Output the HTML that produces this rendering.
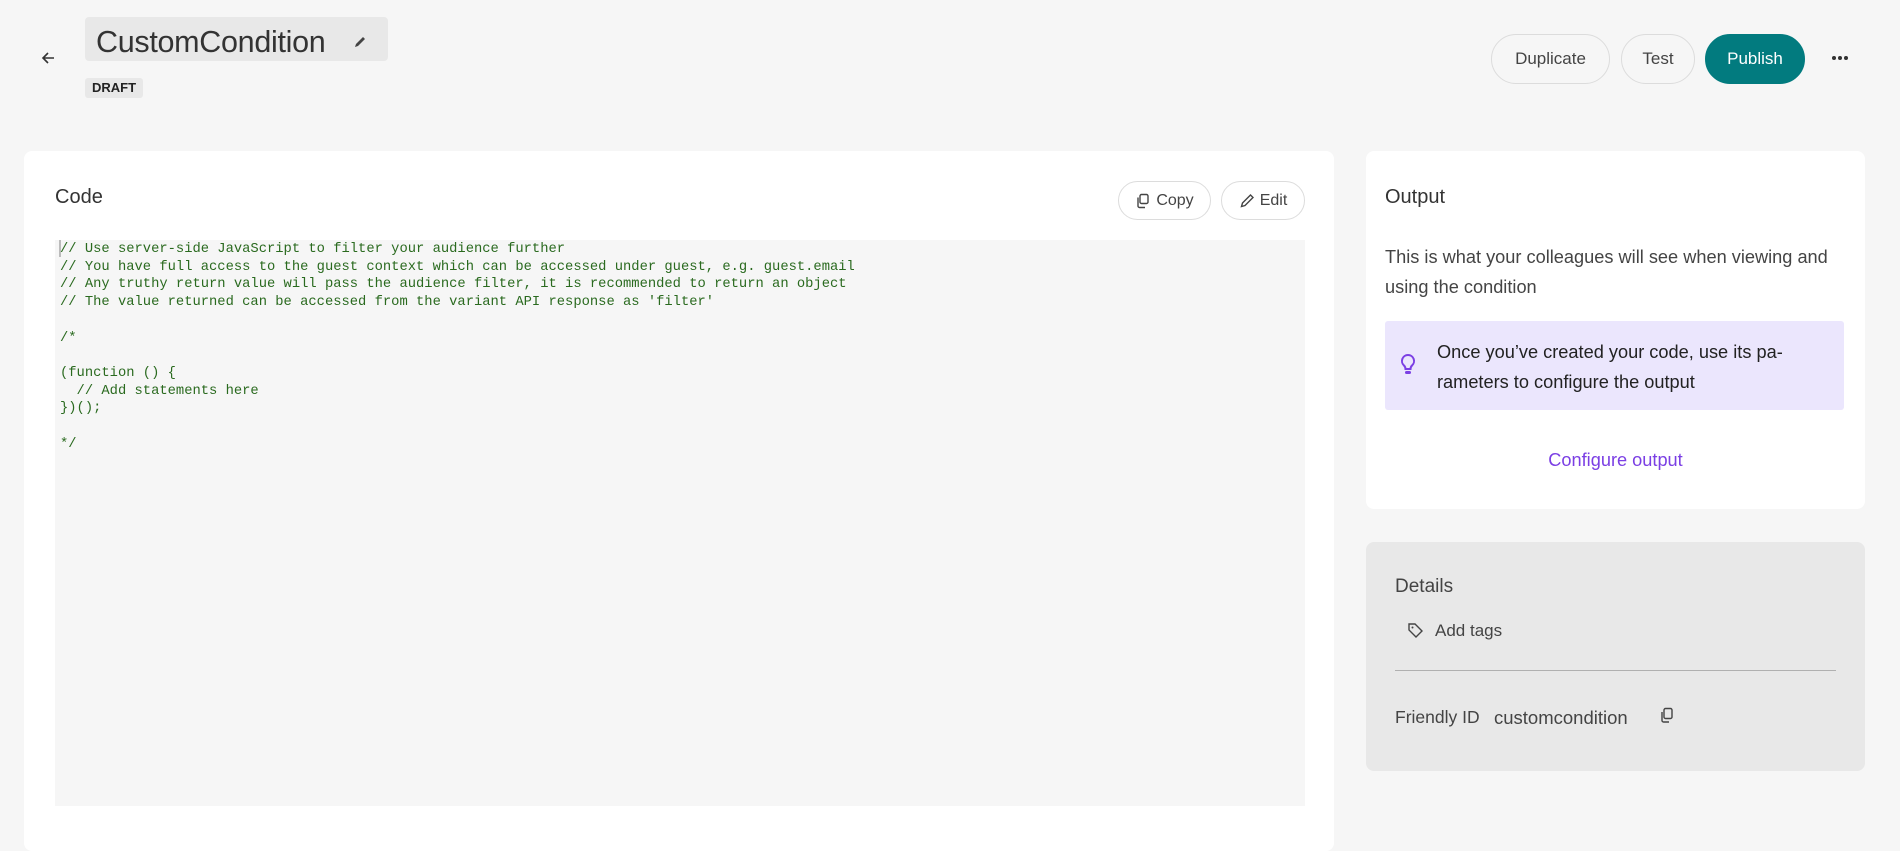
<!DOCTYPE html>
<html><head><meta charset="utf-8"><style>
*{box-sizing:border-box;margin:0;padding:0}
body{width:1900px;height:811px;overflow:hidden;background:#f6f6f6;font-family:"Liberation Sans",sans-serif;color:#333;position:relative}
.abs{position:absolute}
.btn{position:absolute;border:1px solid #dcdcdc;border-radius:26px;display:flex;align-items:center;justify-content:center;font-size:17px;color:#444;background:transparent}
.code{font-family:"Liberation Mono",monospace;font-size:13.8px;line-height:17.7px;color:#2a6a1f;white-space:pre}
</style></head><body>
<svg class="abs" style="left:40px;top:50px" width="16" height="16" viewBox="0 0 16 16"><path d="M14 8H3M8 3L3 8l5 5" stroke="#333" stroke-width="1.6" fill="none"/></svg>
<div class="abs" style="left:85px;top:17px;width:303px;height:44px;background:#e8e8e8;border-radius:4px"></div>
<div class="abs" style="left:96px;top:25px;font-size:30.5px;color:#333;letter-spacing:-0.3px">CustomCondition</div>
<svg class="abs" style="left:352px;top:34px" width="16" height="16" viewBox="0 0 16 16"><path d="M3 13l1-3 7-7 2 2-7 7z" fill="#444"/></svg>
<div class="abs" style="left:85px;top:78px;width:58px;height:20px;background:#e8e8e8;border-radius:3px;font-size:13px;font-weight:bold;line-height:20px;text-align:center;color:#222">DRAFT</div>

<div class="btn" style="left:1491px;top:34px;width:119px;height:50px">Duplicate</div>
<div class="btn" style="left:1621px;top:34px;width:74px;height:50px">Test</div>
<div class="btn" style="left:1705px;top:34px;width:100px;height:50px;background:#027b7f;border-color:#027b7f;color:#fff">Publish</div>
<div class="abs" style="left:1832px;top:56px;width:4px;height:4px;border-radius:2px;background:#333;box-shadow:6px 0 #333,12px 0 #333"></div>

<div class="abs" style="left:24px;top:151px;width:1310px;height:700px;background:#fff;border-radius:8px"></div>
<div class="abs" style="left:55px;top:186px;font-size:20px;color:#333">Code</div>
<div class="btn" style="left:1118px;top:181px;width:93px;height:39px;font-size:16px">
<svg width="16" height="16" viewBox="0 0 16 16" style="margin-right:5px"><rect x="5" y="1.5" width="8" height="9" rx="1.5" stroke="#444" fill="none" stroke-width="1.4"/><path d="M3 4.5v8.5a1.5 1.5 0 0 0 1.5 1.5H10" stroke="#444" fill="none" stroke-width="1.4"/></svg>Copy</div>
<div class="btn" style="left:1221px;top:181px;width:84px;height:39px;font-size:16px">
<svg width="16" height="16" viewBox="0 0 16 16" style="margin-right:5px"><path d="M2.5 13.5l1-3.5 8-8 2.5 2.5-8 8z" stroke="#444" fill="none" stroke-width="1.4"/></svg>Edit</div>
<div class="abs" style="left:55px;top:240px;width:1250px;height:566px;background:#f6f6f6"></div>
<div class="abs" style="left:59px;top:240px;width:2px;height:17px;background:#bbb"></div>
<div class="abs code" style="left:60px;top:241px">// Use server-side JavaScript to filter your audience further
// You have full access to the guest context which can be accessed under guest, e.g. guest.email
// Any truthy return value will pass the audience filter, it is recommended to return an object
// The value returned can be accessed from the variant API response as 'filter'

/*

(function () {
  // Add statements here
})();

*/</div>

<div class="abs" style="left:1366px;top:151px;width:499px;height:358px;background:#fff;border-radius:8px"></div>
<div class="abs" style="left:1385px;top:186px;font-size:20px;color:#333">Output</div>
<div class="abs" style="left:1385px;top:242px;width:470px;font-size:18.2px;line-height:30px;color:#444">This is what your colleagues will see when viewing and using the condition</div>
<div class="abs" style="left:1385px;top:321px;width:459px;height:89px;background:#ebe6fd;border-radius:3px"></div>
<svg class="abs" style="left:1398px;top:352px" width="20" height="26" viewBox="0 0 20 26"><path d="M10 3a6 6 0 0 0-4 10.5c1 1 1.5 2 1.5 3.5h5c0-1.5.5-2.5 1.5-3.5A6 6 0 0 0 10 3z" stroke="#7b3fe4" stroke-width="2" fill="none"/><rect x="7" y="19" width="6" height="3" rx="1.5" fill="#7b3fe4"/></svg>
<div class="abs" style="left:1437px;top:337px;width:400px;font-size:18.2px;line-height:30px;color:#222">Once you’ve created your code, use its pa-<br>rameters to configure the output</div>
<div class="abs" style="left:1366px;top:450px;width:499px;text-align:center;font-size:18.2px;color:#7b3fe4">Configure output</div>

<div class="abs" style="left:1366px;top:542px;width:499px;height:229px;background:#e8e8e8;border-radius:8px"></div>
<div class="abs" style="left:1395px;top:576px;font-size:19px;color:#444">Details</div>
<svg class="abs" style="left:1407px;top:622px" width="17" height="17" viewBox="0 0 17 17"><path d="M2 2h6l7 7-6 6-7-7z" stroke="#444" stroke-width="1.4" fill="none"/><circle cx="5.5" cy="5.5" r="1" fill="#444"/></svg>
<div class="abs" style="left:1435px;top:621px;font-size:17px;color:#444">Add tags</div>
<div class="abs" style="left:1395px;top:670px;width:441px;height:1px;background:#b0b0b0"></div>
<div class="abs" style="left:1395px;top:707px;font-size:17.5px;color:#444">Friendly ID</div>
<div class="abs" style="left:1494px;top:707px;font-size:18.5px;color:#444">customcondition</div>
<svg class="abs" style="left:1659px;top:707px" width="16" height="17" viewBox="0 0 16 17"><rect x="5" y="1.5" width="8" height="10" rx="1.5" stroke="#444" fill="none" stroke-width="1.4"/><path d="M3 5v8.5a1.5 1.5 0 0 0 1.5 1.5H10" stroke="#444" fill="none" stroke-width="1.4"/></svg>
</body></html>
